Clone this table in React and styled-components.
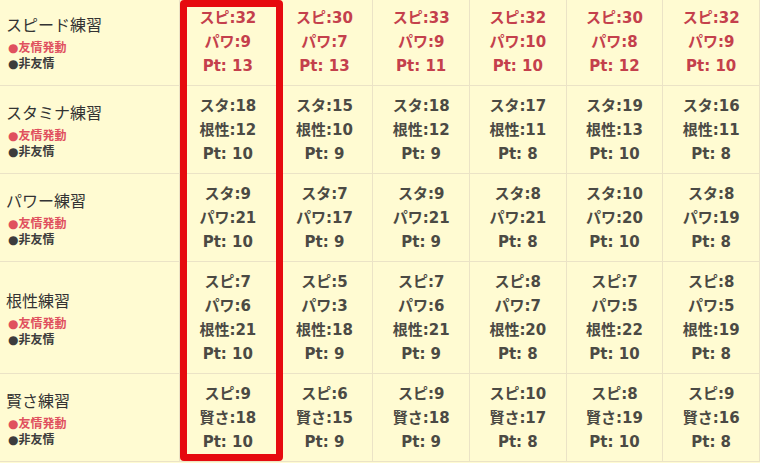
import React from "react";
import styled, { createGlobalStyle } from "styled-components";

const GlobalStyle = createGlobalStyle`
  html, body {
    margin: 0;
    padding: 0;
    background: #fffbd2;
    overflow: hidden;
  }
`;

const rows = [
  {
    title: "スピード練習",
    hot: true,
    cells: [
      ["スピ:32", "パワ:9", "Pt: 13"],
      ["スピ:30", "パワ:7", "Pt: 13"],
      ["スピ:33", "パワ:9", "Pt: 11"],
      ["スピ:32", "パワ:10", "Pt: 10"],
      ["スピ:30", "パワ:8", "Pt: 12"],
      ["スピ:32", "パワ:9", "Pt: 10"],
    ],
  },
  {
    title: "スタミナ練習",
    cells: [
      ["スタ:18", "根性:12", "Pt: 10"],
      ["スタ:15", "根性:10", "Pt: 9"],
      ["スタ:18", "根性:12", "Pt: 9"],
      ["スタ:17", "根性:11", "Pt: 8"],
      ["スタ:19", "根性:13", "Pt: 10"],
      ["スタ:16", "根性:11", "Pt: 8"],
    ],
  },
  {
    title: "パワー練習",
    cells: [
      ["スタ:9", "パワ:21", "Pt: 10"],
      ["スタ:7", "パワ:17", "Pt: 9"],
      ["スタ:9", "パワ:21", "Pt: 9"],
      ["スタ:8", "パワ:21", "Pt: 8"],
      ["スタ:10", "パワ:20", "Pt: 10"],
      ["スタ:8", "パワ:19", "Pt: 8"],
    ],
  },
  {
    title: "根性練習",
    cells: [
      ["スピ:7", "パワ:6", "根性:21", "Pt: 10"],
      ["スピ:5", "パワ:3", "根性:18", "Pt: 9"],
      ["スピ:7", "パワ:6", "根性:21", "Pt: 9"],
      ["スピ:8", "パワ:7", "根性:20", "Pt: 8"],
      ["スピ:7", "パワ:5", "根性:22", "Pt: 10"],
      ["スピ:8", "パワ:5", "根性:19", "Pt: 8"],
    ],
  },
  {
    title: "賢さ練習",
    cells: [
      ["スピ:9", "賢さ:18", "Pt: 10"],
      ["スピ:6", "賢さ:15", "Pt: 9"],
      ["スピ:9", "賢さ:18", "Pt: 9"],
      ["スピ:10", "賢さ:17", "Pt: 8"],
      ["スピ:8", "賢さ:19", "Pt: 10"],
      ["スピ:9", "賢さ:16", "Pt: 8"],
    ],
  },
];

const App = () => {
  return (
    <>
      <GlobalStyle />
      <Wrapper>
        <Tabla>
          {rows.map((row) => (
            <React.Fragment key={row.title}>
              <LabelCell>
                <Titulo>{row.title}</Titulo>
                <Nota $red>●友情発動</Nota>
                <Nota>●非友情</Nota>
              </LabelCell>
              {row.cells.map((lines, i) => (
                <DataCell key={i} $red={row.hot}>
                  {lines.map((l) => (
                    <div key={l}>{l}</div>
                  ))}
                </DataCell>
              ))}
            </React.Fragment>
          ))}
        </Tabla>
        <Resaltado />
      </Wrapper>
    </>
  );
};

const Wrapper = styled.div`
  position: relative;
  width: 760px;
  margin-top: -2px;
`;

const Tabla = styled.div`
  display: grid;
  grid-template-columns: 180px repeat(6, 1fr);
  width: 760px;
  font-family: "DejaVu Sans", "Noto Sans CJK JP", sans-serif;
`;

const LabelCell = styled.div`
  display: flex;
  flex-direction: column;
  justify-content: center;
  padding: 0 0 0 6px;
  border-bottom: 1px solid #ebe3c6;
  border-right: 1px solid #ebe3c6;
`;

const Titulo = styled.div`
  font-family: "Noto Sans CJK JP", sans-serif;
  font-size: 16px;
  line-height: 24px;
  color: #333;
  margin-bottom: 4px;
`;

const Nota = styled.div`
  font-family: "DejaVu Sans", "Noto Sans CJK JP", sans-serif;
  font-size: 12px;
  font-weight: 700;
  line-height: 16px;
  padding-left: 2px;
  color: ${(p) => (p.$red ? "#e0505e" : "#3c3c3c")};
`;

const DataCell = styled.div`
  display: flex;
  flex-direction: column;
  justify-content: center;
  align-items: center;
  padding: 8px 0 7px;
  font-size: 15px;
  font-weight: 700;
  line-height: 24px;
  color: ${(p) => (p.$red ? "#c4404c" : "#4b4a44")};
  border-bottom: 1px solid #ebe3c6;
  border-right: 1px solid #ebe3c6;
`;

const Resaltado = styled.div`
  position: absolute;
  left: 180px;
  top: 2px;
  width: 103px;
  height: 461px;
  box-sizing: border-box;
  border: 7px solid #e60a0f;
  border-radius: 4px;
  pointer-events: none;
`;

export default App;
